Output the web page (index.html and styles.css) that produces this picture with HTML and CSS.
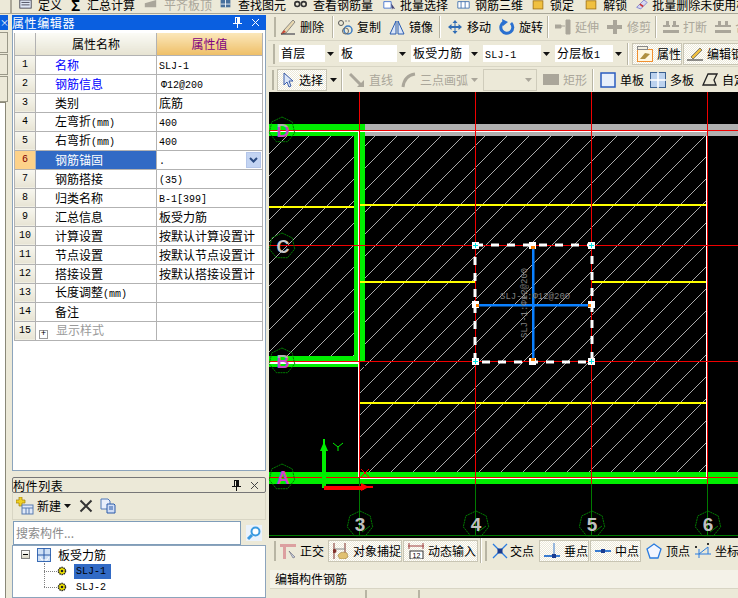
FILE: index.html
```html
<!DOCTYPE html>
<html lang="zh">
<head>
<meta charset="utf-8">
<title>属性编辑器</title>
<link rel="stylesheet" href="styles.css">
</head>
<body>
<div class="app">
  <div class="topbar">
    <span class="grip"></span>
    <span class="t t-def"><svg class="i" viewBox="0 0 16 16"><rect x="1" y="0" width="14" height="10" fill="#dfe6f5" stroke="#334"/><path d="M3 3h10M3 6h10" stroke="#334"/></svg><b>定义</b></span>
    <span class="t t-sum"><span class="sigma">Σ</span><b>汇总计算</b></span>
    <span class="t t-flat dis"><svg class="i" viewBox="0 0 16 16"><path d="M1 4l14-4v9H1z" fill="#aaa69a"/></svg><b>平齐板顶</b></span>
    <span class="t t-find"><svg class="i" viewBox="0 0 16 16"><path d="M2 0h12v9H2z" fill="#48709c"/><path d="M8 0v9M2 5h12" stroke="#fff"/></svg><b>查找图元</b></span>
    <span class="t t-view"><svg class="i" viewBox="0 0 16 16"><circle cx="4" cy="5" r="3" fill="none" stroke="#333" stroke-width="2"/><circle cx="12" cy="5" r="3" fill="none" stroke="#333" stroke-width="2"/></svg><b>查看钢筋量</b></span>
    <span class="t t-batch"><svg class="i" viewBox="0 0 16 16"><path d="M1 2h9v8H1z" fill="#fff" stroke="#36c"/><path d="M10 4l5 7-3-1-1 2z" fill="#447"/></svg><b>批量选择</b></span>
    <span class="t t-3d"><svg class="i" viewBox="0 0 16 16"><path d="M1 2h14v8H1zM5 2v8M10 2v8" fill="#fff" stroke="#36a"/></svg><b>钢筋三维</b></span>
    <span class="t t-lock"><svg class="i i-s" viewBox="0 0 12 16"><rect x="0" y="1" width="12" height="10" fill="#f0c040" stroke="#a07010"/></svg><b>锁定</b></span>
    <span class="t t-unlock"><svg class="i i-s" viewBox="0 0 12 16"><rect x="0" y="1" width="12" height="10" fill="#f0c040" stroke="#a07010"/></svg><b>解锁</b></span>
    <span class="t t-del"><svg class="i" viewBox="0 0 16 16"><path d="M2 9L11 0l4 3-8 8z" fill="#d6d8f0" stroke="#77c"/><path d="M6 5l4 3" stroke="#c33" stroke-width="2"/></svg><b>批量删除未使用构件</b></span>
  </div>

  <div class="main">
    <div class="left">
      <div class="rail">
        <div class="rail-title">×</div>
        <div class="rail-tab"></div>
        <div class="rail-tab"></div>
        <div class="rail-tab rail-tab-last"></div>
        <div class="rail-white"></div>
      </div>
      <div class="panels">
        <div class="panel-title">
          <span class="panel-name">属性编辑器</span>
          <span class="pin">
            <svg class="pin-i" viewBox="0 0 9 11"><path d="M2 0h5v6h2v1H5v4H4V7H0V6h2zM3 1v5h1V1z" fill="#fff"/></svg>
            <svg class="close-i" viewBox="0 0 9 9"><path d="M1 1l7 7M8 1L1 8" stroke="#fff"/></svg>
          </span>
        </div>
        <div class="props">
          <table class="grid">
            <colgroup><col class="c-n"><col class="c-k"><col class="c-v"></colgroup>
            <thead>
              <tr><th></th><th>属性名称</th><th class="th-val">属性值</th></tr>
            </thead>
            <tbody>
              <tr><td class="n">1</td><td class="k blue">名称</td><td class="v"><span class="l">SLJ-1</span></td></tr>
              <tr><td class="n">2</td><td class="k blue">钢筋信息</td><td class="v"><span class="l phi">Φ12@200</span></td></tr>
              <tr><td class="n">3</td><td class="k">类别</td><td class="v">底筋</td></tr>
              <tr><td class="n">4</td><td class="k">左弯折<span class="l">(mm)</span></td><td class="v"><span class="l">400</span></td></tr>
              <tr><td class="n">5</td><td class="k">右弯折<span class="l">(mm)</span></td><td class="v"><span class="l">400</span></td></tr>
              <tr class="sel"><td class="n">6</td><td class="k">钢筋锚固</td><td class="v"><span class="l">.</span><span class="dd"><svg class="dd-i" viewBox="0 0 9 6"><path d="M1 1l3.500 3.500L8 1" fill="none" stroke="#2a4a80" stroke-width="2"/></svg></span></td></tr>
              <tr><td class="n">7</td><td class="k">钢筋搭接</td><td class="v"><span class="l">(35)</span></td></tr>
              <tr><td class="n">8</td><td class="k">归类名称</td><td class="v"><span class="l">B-1[399]</span></td></tr>
              <tr><td class="n">9</td><td class="k">汇总信息</td><td class="v">板受力筋</td></tr>
              <tr><td class="n">10</td><td class="k">计算设置</td><td class="v">按默认计算设置计</td></tr>
              <tr><td class="n">11</td><td class="k">节点设置</td><td class="v">按默认节点设置计</td></tr>
              <tr><td class="n">12</td><td class="k">搭接设置</td><td class="v">按默认搭接设置计</td></tr>
              <tr><td class="n">13</td><td class="k">长度调整<span class="l">(mm)</span></td><td class="v"></td></tr>
              <tr><td class="n">14</td><td class="k">备注</td><td class="v"></td></tr>
              <tr class="grp"><td class="n">15</td><td class="k"><span class="plus">+</span>显示样式</td><td class="v"></td></tr>
            </tbody>
          </table>
        </div>
        <div class="list-title">
          <span class="panel-name">构件列表</span>
          <span class="pin">
            <svg class="pin-i" viewBox="0 0 9 11"><path d="M2 0h5v6h2v1H5v4H4V7H0V6h2zM3 1v5h1V1z" fill="#111"/></svg>
            <svg class="close-i" viewBox="0 0 9 9"><path d="M1 1l7 7M8 1L1 8" stroke="#444"/></svg>
          </span>
        </div>
        <div class="list-tools">
          <svg class="i i-new" viewBox="0 0 18 18"><path d="M3 0h3v3h3v3H6v3H3V6H0V3h3z" fill="#f0d020" stroke="#a08010" stroke-width=".7"/><rect x="6" y="8" width="11" height="9" fill="#dfe8f8" stroke="#5a7cb0"/><path d="M6 11h11M10 11v6M13 11v6" stroke="#5a7cb0"/></svg>
          <span class="new-label">新建</span>
          <svg class="arrow-i" viewBox="0 0 7 4"><path d="M0 0h7L3.500 4z" fill="#111"/></svg>
          <svg class="i i-x" viewBox="0 0 14 14"><path d="M1.500 1.500l11 11M12.500 1.500l-11 11" stroke="#333" stroke-width="2"/></svg>
          <svg class="i i-copy" viewBox="0 0 16 16"><path d="M1 1h7l2 2v8H1z" fill="#e8eefb" stroke="#5078b8"/><path d="M7 6h7l1 1v8H7z" fill="#cfdcf5" stroke="#2a5aa8"/><path d="M9 9h4M9 11h4" stroke="#2a5aa8"/></svg>
        </div>
        <div class="search">
          <span class="search-box">搜索构件...</span>
          <svg class="i i-search" viewBox="0 0 16 16"><rect width="16" height="16" fill="#eaf2fb"/><circle cx="9.500" cy="6.500" r="4" fill="#fff" stroke="#3a9ae0" stroke-width="2"/><path d="M6 10l-4 4" stroke="#3a9ae0" stroke-width="3"/></svg>
        </div>
        <div class="tree">
          <div class="tree-root">
            <span class="minus"></span>
            <svg class="i i-root" viewBox="0 0 14 14"><rect x=".5" y=".5" width="13" height="13" fill="#cfe0f5" stroke="#3a6cb5"/><path d="M0 7h14M7 0v14" stroke="#2a5aa8"/><path d="M3 9l2 3h5l2-3" fill="none" stroke="#fff"/></svg>
            <span>板受力筋</span>
          </div>
          <div class="tree-leaf">
            <span class="dots dots-first"></span>
            <svg class="i i-gear" viewBox="0 0 10 10"><circle cx="5" cy="5" r="3.500" fill="#f5e800" stroke="#222" stroke-width="1.500" stroke-dasharray="1.500 .7"/><circle cx="5" cy="5" r="1.300" fill="#222"/></svg>
            <span class="leaf-name leaf-sel">SLJ-1</span>
          </div>
          <div class="tree-leaf">
            <span class="dots"></span>
            <svg class="i i-gear" viewBox="0 0 10 10"><circle cx="5" cy="5" r="3.500" fill="#f5e800" stroke="#222" stroke-width="1.500" stroke-dasharray="1.500 .7"/><circle cx="5" cy="5" r="1.300" fill="#222"/></svg>
            <span class="leaf-name">SLJ-2</span>
          </div>
        </div>
      </div>
    </div>

    <div class="right">
      <div class="tb tb1">
        <span class="grip-v"></span>
        <span class="tool"><svg class="i" viewBox="0 0 16 16"><path d="M1 15l5-1 9-11-2-2-9 10z" fill="#e8d8b0" stroke="#666" stroke-width=".7"/><path d="M1 15h14" stroke="#223"/><path d="M1 15l3-4 2 2z" fill="#c43"/></svg>删除</span>
        <span class="sep sep-a"></span>
        <span class="tool"><svg class="i" viewBox="0 0 16 16"><circle cx="4" cy="4" r="2.500" fill="none" stroke="#555"/><circle cx="11" cy="11" r="4" fill="none" stroke="#3a7cc5" stroke-width="1.500"/><circle cx="8.500" cy="12" r="3" fill="none" stroke="#666"/><path d="M8 2h5" stroke="#888" stroke-dasharray="2 1"/></svg>复制</span>
        <span class="tool"><svg class="i" viewBox="0 0 16 16"><path d="M7 2L1 15h6zM9 2l6 13H9z" fill="#dbe6f8" stroke="#2a5cb0"/></svg>镜像</span>
        <span class="sep sep-c"></span>
        <span class="tool"><svg class="i" viewBox="0 0 16 16"><path d="M8 1l2.500 3h-2v3h3V5L15 8l-3.500 3V9h-3v3h2L8 15l-2.500-3h2V9h-3v2L1 8l3.500-3v2h3V4h-2z" fill="#2f6cb5"/></svg>移动</span>
        <span class="tool"><svg class="i" viewBox="0 0 16 16"><path d="M12 4a6 6 0 1 1-7-1" fill="none" stroke="#2a70d0" stroke-width="3"/><path d="M3 0l6 3-5 4z" fill="#2a70d0"/></svg>旋转</span>
        <span class="sep sep-d"></span>
        <span class="tool dis"><svg class="i" viewBox="0 0 16 16"><path d="M0 6h6v3H0zM6 7h4M11 1h4v14h-4z" fill="#aaa69a" stroke="#aaa69a"/></svg>延伸</span>
        <span class="tool dis"><svg class="i" viewBox="0 0 16 16"><path d="M0 6h15v4H0zM6 1h4v14H6z" fill="#aaa69a"/></svg>修剪</span>
        <span class="sep sep-d"></span>
        <span class="tool dis"><svg class="i" viewBox="0 0 16 16"><path d="M3 2h3v4H3zM10 2h3v4h-3zM0 6h7v2H0zM9 6h7v2H9zM0 11h16v3H0z" fill="#aaa69a"/></svg>打断</span>
        <span class="tool dis"><svg class="i" viewBox="0 0 16 16"><path d="M3 2h3v4H3zM10 2h3v4h-3zM0 6h16v2H0zM0 11h16v3H0z" fill="#aaa69a"/></svg>合并</span>
      </div>

      <div class="tb tb2">
        <span class="grip-v"></span>
        <span class="combo c-floor"><span class="combo-t">首层</span><span class="combo-a"><svg class="arrow-i" viewBox="0 0 7 4"><path d="M0 0h7L3.500 4z" fill="#111"/></svg></span></span>
        <span class="combo c-wide"><span class="combo-t">板</span><span class="combo-a"><svg class="arrow-i" viewBox="0 0 7 4"><path d="M0 0h7L3.500 4z" fill="#111"/></svg></span></span>
        <span class="combo c-wide"><span class="combo-t">板受力筋</span><span class="combo-a"><svg class="arrow-i" viewBox="0 0 7 4"><path d="M0 0h7L3.500 4z" fill="#111"/></svg></span></span>
        <span class="combo c-wide"><span class="combo-t"><span class="l">SLJ-1</span></span><span class="combo-a"><svg class="arrow-i" viewBox="0 0 7 4"><path d="M0 0h7L3.500 4z" fill="#111"/></svg></span></span>
        <span class="combo c-wide"><span class="combo-t">分层板<span class="l">1</span></span><span class="combo-a"><svg class="arrow-i" viewBox="0 0 7 4"><path d="M0 0h7L3.500 4z" fill="#111"/></svg></span></span>
        <span class="sep sep-2"></span>
        <span class="tool btn btn-prop"><svg class="i" viewBox="0 0 16 16"><rect x=".5" y="3.500" width="15" height="12" fill="#fff7e0" stroke="#f09030"/><rect x=".5" y=".5" width="10" height="3" fill="#f4f0e0" stroke="#888"/><path d="M3 13l5-6 5 1-5 5z" fill="#b09040"/></svg>属性</span>
        <span class="tool btn btn-edit"><svg class="i" viewBox="0 0 16 16"><path d="M4 11L13 2l2 2-9 9z" fill="#f0c040" stroke="#555" stroke-width=".7"/><path d="M0 14h16" stroke="#222"/></svg>编辑钢筋</span>
      </div>

      <div class="tb tb3">
        <span class="grip-v"></span>
        <span class="tool btn btn-select"><svg class="i" viewBox="0 0 16 16"><path d="M4 1v12l3-3 2 5 2-1-2-5h4z" fill="#dbe6f8" stroke="#3a5ca8"/></svg>选择</span>
        <svg class="arrow-i arrow-sel" viewBox="0 0 7 4"><path d="M0 0h7L3.500 4z" fill="#111"/></svg>
        <span class="sep sep-e"></span>
        <span class="tool dis"><svg class="i" viewBox="0 0 16 16"><path d="M1 2l11 11" stroke="#aaa69a" stroke-width="3"/><path d="M15 15H8l7-7z" fill="#aaa69a"/></svg>直线</span>
        <span class="tool dis tool-arc"><svg class="i" viewBox="0 0 16 16"><path d="M2 15C3 7 7 3 14 2" fill="none" stroke="#aaa69a" stroke-width="3"/></svg>三点画弧<svg class="arrow-i" viewBox="0 0 7 4"><path d="M0 0h7L3.500 4z" fill="#aaa69a"/></svg></span>
        <span class="dis-box"><svg class="arrow-i" viewBox="0 0 7 4"><path d="M0 0h7L3.500 4z" fill="#aaa69a"/></svg></span>
        <span class="tool dis tool-rect"><svg class="i" viewBox="0 0 16 16"><rect y="2" width="16" height="11" fill="#aaa69a"/></svg>矩形</span>
        <span class="sep sep-f"></span>
        <span class="tool"><svg class="i" viewBox="0 0 16 16"><rect x="1" y="1" width="14" height="14" fill="#e8f0fb" stroke="#2a5cc0" stroke-width="1.500"/></svg>单板</span>
        <span class="tool tool-multi"><svg class="i" viewBox="0 0 16 16"><rect x=".5" y=".5" width="15" height="15" fill="#bcd2ee" stroke="#3a6090"/><path d="M8 0v16M0 8h16" stroke="#fff" stroke-width="1.500"/></svg>多板</span>
        <span class="tool"><svg class="i" viewBox="0 0 16 16"><path d="M1 13L6 2h9l-3 6 2 5z" fill="none" stroke="#222" stroke-width="1.300"/></svg>自定义</span>
      </div>

      <svg class="canvas" viewBox="268 92 470 446" xmlns="http://www.w3.org/2000/svg">
        <defs>
          <pattern id="hatch" patternUnits="userSpaceOnUse" x="5" y="0" width="22" height="22">
            <path d="M0 22L22 0" stroke="#aaa" stroke-width="1" shape-rendering="crispEdges"/>
          </pattern>
          <linearGradient id="twotone" x1="0" y1="0" x2="0" y2="1">
            <stop offset=".32" stop-color="#b0b0b0"/>
            <stop offset=".32" stop-color="#c848c8"/>
          </linearGradient>
          <polygon id="bub" points="0,-13 10.200,-8.100 12.700,2.900 5.600,11.700 -5.600,11.700 -12.700,2.900 -10.200,-8.100" fill="none" stroke="#007a00" stroke-dasharray="2 .6"/>
        </defs>
        <rect x="268" y="92" width="470" height="446" fill="#000"/>
        <rect x="268" y="92" width="1" height="446" fill="#ece9d8"/>

        <rect x="269" y="136" width="85" height="220" fill="url(#hatch)"/>
        <rect x="365" y="136" width="342" height="336" fill="url(#hatch)"/>
        <rect x="360" y="367" width="5" height="105" fill="url(#hatch)"/>

        <rect x="360" y="124" width="378" height="12" fill="#b0b0b0"/>
        <rect x="269" y="124" width="91" height="12" fill="#0e0"/>
        <rect x="354" y="124" width="11" height="238" fill="#0e0"/>
        <rect x="269" y="356" width="91" height="11" fill="#0e0"/>
        <rect x="269" y="472" width="469" height="12" fill="#0e0"/>

        <g fill="#ff0">
          <rect x="269" y="206" width="85" height="2"/>
          <rect x="359" y="204" width="348" height="2"/>
          <rect x="360" y="281" width="115" height="2"/>
          <rect x="592" y="281" width="115" height="2"/>
          <rect x="360" y="402" width="347" height="2"/>
        </g>

        <g fill="#fff">
          <rect x="269" y="130" width="438" height="2"/>
          <rect x="269" y="362" width="91" height="2"/>
          <rect x="358" y="130" width="2" height="348"/>
          <rect x="706" y="136" width="2" height="342"/>
          <rect x="360" y="477" width="348" height="2"/>
        </g>

        <g fill="#f00000">
          <rect x="269" y="130" width="469" height="1"/>
          <rect x="269" y="245" width="469" height="1"/>
          <rect x="269" y="361" width="469" height="1"/>
          <rect x="269" y="477" width="469" height="1"/>
          <rect x="359" y="92" width="1" height="386"/>
          <rect x="475" y="92" width="1" height="392"/>
          <rect x="591" y="92" width="1" height="392"/>
          <rect x="707" y="92" width="1" height="392"/>
        </g>

        <g fill="#007a00">
          <rect x="359" y="478" width="1" height="58"/>
          <rect x="475" y="484" width="1" height="52"/>
          <rect x="591" y="484" width="1" height="52"/>
          <rect x="707" y="484" width="1" height="52"/>
          <rect x="269" y="535" width="469" height="1"/>
        </g>

        <use href="#bub" x="282" y="130"/>
        <use href="#bub" x="282" y="246"/>
        <use href="#bub" x="282" y="361"/>
        <use href="#bub" x="282" y="477"/>
        <use href="#bub" x="360" y="524"/>
        <use href="#bub" x="476" y="524"/>
        <use href="#bub" x="592" y="524"/>
        <use href="#bub" x="708" y="524"/>

        <g class="cad-l">
          <text x="283" y="136.500" fill="url(#twotone)">D</text>
          <text class="cad-c" x="283" y="252.500">C</text>
          <text x="283" y="367.500" fill="url(#twotone)">B</text>
          <text class="cad-a" x="283" y="483.500">A</text>
        </g>
        <g class="cad-n">
          <text x="360" y="531">3</text>
          <text x="476" y="531">4</text>
          <text x="592" y="531">5</text>
          <text x="708" y="531">6</text>
        </g>
        <path d="M362 532l8-6M478 532l8-6M594 532l8-6M710 532l8-6" stroke="#007a00"/>

        <path d="M475 245H592V362H475Z" fill="none" stroke="#fff" stroke-width="3" stroke-dasharray="8 8"/>
        <rect x="532" y="246" width="2.500" height="115" fill="#0a80ff"/>
        <rect x="476" y="304" width="115" height="2.500" fill="#0a80ff"/>

        <g fill="#fff">
          <rect x="472" y="242" width="7" height="7"/>
          <rect x="588" y="242" width="7" height="7"/>
          <rect x="472" y="358" width="7" height="7"/>
          <rect x="588" y="358" width="7" height="7"/>
          <rect x="529" y="242" width="7" height="7"/>
          <rect x="529" y="358" width="7" height="7"/>
          <rect x="472" y="301" width="7" height="7"/>
          <rect x="588" y="301" width="7" height="7"/>
        </g>
        <path d="M473 245.500h5M475.500 243v5M589 245.500h5M591.500 243v5M473 361.500h5M475.500 359v5M589 361.500h5M591.500 359v5" stroke="#00e0e0"/>
        <g fill="#ff8000">
          <rect x="531" y="246" width="4" height="3"/>
          <rect x="531" y="358" width="4" height="3"/>
          <rect x="476" y="304" width="3" height="3"/>
          <rect x="588" y="304" width="3" height="3"/>
        </g>

        <text class="cad-t" x="500" y="299">SLJ-1:Φ12@200</text>
        <text class="cad-t" transform="translate(527 338) rotate(-90)">SLJ-1:Φ12@200</text>

        <path d="M322 488V451H320L323 444V439H325V444L328 451H326V488Z" fill="#0e0"/>
        <path d="M333 443L338 447L343 443M338 447V451" fill="none" stroke="#0e0"/>
        <rect x="324" y="486" width="40" height="4" fill="#f00"/>
        <path d="M361 483L367 486H373V488H367L361 491Z" fill="#f00"/>
        <path d="M361 469L369 477M369 469L361 477" stroke="#f00"/>
      </svg>

      <div class="tb tb4">
        <span class="grip-v"></span>
        <span class="tool"><svg class="i" viewBox="0 0 16 16"><path d="M0 1h16v3H6v12H3V4H0z" fill="#dca0a0"/><path d="M9 8l6 6-2 1z" fill="#c8d0e0" stroke="#667" stroke-width=".6"/></svg>正交</span>
        <span class="btn-group">
          <span class="tool btn btn-snap-a"><svg class="i" viewBox="0 0 16 16"><path d="M1 0v16M12 0v16" stroke="#80302a"/><path d="M1 6h11" stroke="#888"/><circle cx="1.500" cy="8" r="2" fill="#80302a"/><path d="M5 13c0-3 5-5 9-3l1 4-3 2H7z" fill="#e0c070" stroke="#a08040" stroke-width=".6"/></svg>对象捕捉</span>
          <span class="tool btn btn-snap-b"><svg class="i" viewBox="0 0 16 16"><path d="M0 3h16M1 0v6M15 0v6" stroke="#a04040"/><rect x="2" y="8" width="13" height="8" fill="#fff" stroke="#333"/><text class="mini" x="8.500" y="15">12</text></svg>动态输入</span>
        </span>
        <span class="sep sep-b"></span>
        <span class="grip-v"></span>
        <span class="tool tool-cross"><svg class="i" viewBox="0 0 16 16"><path d="M1 1l14 14M15 1L1 15" stroke="#2a7ce0" stroke-width="1.300"/><rect x="5.500" y="5.500" width="5" height="5" fill="#1a3c90"/></svg>交点</span>
        <span class="btn-group">
          <span class="tool btn btn-snap-c"><svg class="i" viewBox="0 0 16 16"><path d="M0 13h16" stroke="#3a7cd0" stroke-width="2"/><path d="M10 0v15" stroke="#3a7cd0"/><rect x="8" y="11" width="4" height="4" fill="#1a3c90"/></svg>垂点</span>
          <span class="tool btn btn-snap-d"><svg class="i" viewBox="0 0 16 16"><path d="M0 8h16" stroke="#3a7cd0" stroke-width="2"/><rect x="6" y="6" width="4" height="4" fill="#1a3c90"/></svg>中点</span>
        </span>
        <span class="tool"><svg class="i" viewBox="0 0 16 16"><path d="M8 1l7 5-3 9H4L1 6z" fill="#f2f6ff" stroke="#2a7ce0" stroke-width="1.300"/></svg>顶点</span>
        <span class="tool"><svg class="i" viewBox="0 0 16 16"><path d="M4 6v9M0 11h16M4 11L13 4v7" fill="none" stroke="#2a7ce0"/><path d="M0 3l2 2M2 3L0 5M12 0l2 2M14 0l-2 2" stroke="#333"/></svg>坐标</span>
      </div>

      <div class="status"><span class="status-box">编辑构件钢筋</span></div>
      <div class="clip-bar">
        <span class="clip-sep clip-a"></span>
        <span class="clip-sep clip-b"></span>
      </div>
    </div>
  </div>
</div>
</body>
</html>
```

FILE: styles.css
```css
* { box-sizing: border-box; }
html, body { margin: 0; padding: 0; }
body {
  width: 738px;
  height: 598px;
  overflow: hidden;
  background: #ece9d8;
  font-family: "Noto Sans CJK SC", "Liberation Sans", sans-serif;
  font-size: 12px;
  color: #000;
}
.app { width: 738px; height: 598px; display: flex; flex-direction: column; overflow: hidden; }
.l { font-family: "Liberation Mono", monospace; font-size: 10px; line-height: 1; }
.phi { margin-left: 2px; }
.i { display: block; width: 16px; height: 16px; flex: none; }
.dis { color: #aaa69a; }

/* top strip, cut off by the window */
.topbar {
  height: 14px;
  flex: none;
  display: flex;
  align-items: flex-end;
  overflow: hidden;
  border-bottom: 1px solid #a8a698;
  padding-left: 10px;
}
.grip { width: 2px; height: 13px; background: #aca899; flex: none; margin-right: 6px; }
.t { display: flex; align-items: flex-end; flex: none; height: 16px; gap: 5px; }
.t b { font-weight: 400; line-height: 16px; font-size: 12px; }
.t .i { height: 13px; width: 15px; }
.t .i-s { width: 12px; }
.sigma { font-weight: 700; font-size: 15px; line-height: 16px; width: 10px; }
.t-sum { margin-left: 9px; gap: 6px; }
.t-flat { margin-left: 8px; gap: 6px; }
.t-find { margin-left: 6px; gap: 5px; }
.t-view { margin-left: 7px; gap: 5px; }
.t-batch { margin-left: 9px; gap: 3px; }
.t-3d { margin-left: 8px; gap: 4px; }
.t-lock { margin-left: 9px; gap: 6px; }
.t-unlock { margin-left: 11px; gap: 6px; }
.t-del { margin-left: 7px; gap: 3px; }

.main { flex: 1; min-height: 0; display: flex; }

/* left column */
.left { width: 268px; flex: none; display: flex; }
.rail { width: 12px; flex: none; display: flex; flex-direction: column; padding-top: 1px; }
.rail-title {
  height: 15px;
  background: #0a5fe0;
  color: #fff;
  font-size: 9px;
  line-height: 15px;
  overflow: hidden;
  width: 8px;
  margin-bottom: 2px;
}
.rail-tab { height: 21px; width: 8px; background: #ece9d8; border: 1px solid #9a9888; border-left: 0; margin-bottom: 1px; }
.rail-tab-last { height: 26px; margin-bottom: 0; }
.rail-white { flex: 1; width: 6px; background: #fff; border-right: 1px solid #8a8878; border-top: 1px solid #8a8878; }

.panels { width: 254px; flex: none; display: flex; flex-direction: column; padding-top: 1px; }
.panel-title {
  height: 15px;
  flex: none;
  background: #0a5fe0;
  color: #fff;
  display: flex;
  align-items: center;
  justify-content: space-between;
}
.panel-name { font-size: 12px; letter-spacing: .6px; line-height: 15px; }
.pin { display: flex; align-items: center; gap: 9px; padding-right: 6px; }
.pin-i { width: 9px; height: 11px; display: block; }
.close-i { width: 9px; height: 9px; display: block; }

.props {
  height: 441px;
  flex: none;
  background: #fff;
  border: 1px solid #8ca4bc;
  border-top: 0;
  padding: 3px 0 0 1px;
}
.grid { border-collapse: collapse; table-layout: fixed; width: 248px; }
.c-n { width: 21px; }
.c-k { width: 121px; }
.c-v { width: 106px; }
.grid th, .grid td { border: 1px solid #b2b2b2; padding: 0; height: 19px; line-height: 14px; white-space: nowrap; overflow: hidden; font-weight: 400; }
.grid thead th { height: 22px; background: linear-gradient(#fbfbf6, #e6e3d2); border-top: 0; }
.grid thead th.th-val { background: linear-gradient(#fbe7ba, #eebf68); color: #800080; }
.grid .n { background: linear-gradient(#f8f7f0, #e7e4d4); text-align: center; font-family: "Liberation Mono", monospace; font-size: 10px; }
.grid .k { padding-left: 19px; }
.grid .v { padding-left: 2px; position: relative; }
.blue { color: #0000ff; }
.sel .n { background: #fdd28a; color: #800000; }
.sel .k { background: #316ac5; color: #fff; }
.dd {
  position: absolute;
  right: 1px;
  top: 1px;
  width: 15px;
  height: 16px;
  background: #c3d4f2;
  border: 1px solid #b4c6ea;
  display: flex;
  align-items: center;
  justify-content: center;
}
.dd-i { width: 9px; height: 6px; display: block; }
.grp .k { color: #9a9a9a; padding-left: 2px; }
.plus {
  display: inline-block;
  width: 9px;
  height: 9px;
  border: 1px solid #9a9a9a;
  color: #000;
  font-size: 9px;
  line-height: 7px;
  text-align: center;
  font-family: "Liberation Mono", monospace;
  margin: 0 8px 0 1px;
  vertical-align: -1px;
}

.list-title {
  height: 16px;
  flex: none;
  margin-top: 6px;
  border: 1px solid #777;
  border-radius: 2px;
  background: #ece9d8;
  display: flex;
  align-items: center;
  justify-content: space-between;
}
.list-tools {
  height: 27px;
  flex: none;
  display: flex;
  align-items: center;
  padding-left: 3px;
  border: 1px solid #d8d5c4;
  border-top: 0;
}
.i-new { width: 18px; height: 18px; }
.new-label { margin-left: 3px; line-height: 16px; }
.arrow-i { width: 7px; height: 4px; display: block; flex: none; }
.list-tools .arrow-i { margin-left: 3px; }
.i-x { width: 14px; height: 14px; margin-left: 8px; }
.i-copy { margin-left: 7px; }
.search { height: 25px; flex: none; display: flex; align-items: center; padding-left: 1px; }
.search-box {
  width: 228px;
  height: 24px;
  background: #fff;
  border: 1px solid #7f9db9;
  color: #8a8a8a;
  line-height: 22px;
  padding-left: 2px;
}
.i-search { margin-left: 5px; }
.tree { flex: 1; background: #fff; border: 1px solid #8ca4bc; padding-left: 8px; }
.tree-root { display: flex; align-items: center; height: 17px; line-height: 16px; }
.minus {
  width: 9px;
  height: 9px;
  border: 1px solid #808080;
  background: linear-gradient(#fff, #d8d5c4);
  position: relative;
  flex: none;
}
.minus::after { content: ""; position: absolute; left: 1px; right: 1px; top: 3px; height: 1px; background: #000; }
.i-root { width: 14px; height: 14px; margin: 0 7px; }
.tree-leaf { display: flex; align-items: center; height: 16px; padding-left: 23px; }
.dots { width: 13px; border-bottom: 1px dotted #808080; position: relative; flex: none; }
.dots::before { content: ""; position: absolute; left: 0; bottom: 0; height: 16px; border-left: 1px dotted #808080; }
.dots-first::before { height: 8px; }
.i-gear { width: 10px; height: 10px; }
.leaf-name { margin-left: 7px; padding: 0 2px; font-family: "Liberation Mono", monospace; font-size: 10px; line-height: 15px; }
.leaf-sel { background: #316ac5; width: 37px; }

/* right column */
.right { flex: 1; min-width: 0; display: flex; flex-direction: column; }
.tb { flex: none; display: flex; align-items: center; gap: 8px; white-space: nowrap; overflow: hidden; }
.tb1 { height: 26px; padding-left: 6px; }
.tb1 > .grip-v { margin-right: -4px; }
.tb2 { height: 26px; padding-left: 5px; gap: 4px; border-top: 1px solid #d8d5c4; }
.tb3 { height: 26px; padding-left: 4px; border-top: 1px solid #d8d5c4; }
.tb3 > .grip-v { margin-right: -5px; }
.tb4 { height: 25px; padding-left: 6px; gap: 5px; }
.tb4 > .grip-v:first-child { margin-right: -1px; }
.grip-v { width: 2px; height: 20px; background: #b8b5a4; flex: none; }
.tool { display: flex; align-items: center; gap: 4px; flex: none; line-height: 16px; }
.sep { width: 2px; height: 22px; background: #b8b5a4; border-right: 1px solid #fff; flex: none; }
.sep-a { margin-right: -5px; }
.sep-c { margin: 0 -2px 0 -2px; }
.sep-d { margin: 0 -2px 0 -4px; }
.sep-e { margin: 0 -2px 0 -4px; }
.sep-f { margin: 0 -2px 0 -3px; }
.sep-2 { margin-right: -1px; }
.sep-b { margin: 0 -2px 0 -3px; height: 25px; }
.btn {
  border: 1px solid #c8c5b4;
  background: repeating-conic-gradient(#fff 0 25%, #ece9d8 0 50%) 0 0 / 2px 2px;
  height: 22px;
  padding-left: 4px;
}
.btn-prop { width: 50px; }
.btn-edit { width: 70px; margin-left: -3px; padding-left: 3px; }
.btn-select { width: 50px; padding-left: 2px; gap: 3px; }
.arrow-sel { margin-left: -5px; }
.tool-arc { gap: 3px; }
.dis-box {
  width: 54px;
  height: 22px;
  border: 1px solid #cfccbb;
  flex: none;
  margin-left: -3px;
  display: flex;
  align-items: center;
  justify-content: flex-end;
  padding-right: 4px;
}
.tool-rect { margin-left: -2px; }
.tool-multi { margin-left: -2px; }
.combo { display: flex; height: 17px; background: #fff; flex: none; }
.c-floor { width: 56px; }
.c-wide { width: 68px; }
.combo-t { flex: 1; padding-left: 2px; line-height: 16px; letter-spacing: .3px; }
.combo-a { width: 10px; background: #ece9d8; display: flex; align-items: center; justify-content: center; }
.canvas { display: block; width: 470px; height: 446px; flex: none; }
.cad-l text { font-family: "Liberation Sans", sans-serif; font-size: 18px; font-weight: 700; text-anchor: middle; }
.cad-c { fill: #c8c8c8; }
.cad-a { fill: #d040d0; }
.cad-n text { font-family: "Liberation Sans", sans-serif; font-size: 19px; font-weight: 700; fill: #c0c0c0; text-anchor: middle; }
.cad-t { font-family: "Liberation Mono", monospace; font-size: 9px; fill: #808080; }
.mini { font-family: "Liberation Sans", sans-serif; font-size: 7px; text-anchor: middle; fill: #000; }
.btn-group { display: flex; gap: 1px; flex: none; }
.btn-snap-a { width: 74px; margin-left: -1px; }
.btn-snap-b { width: 75px; }
.btn-snap-c { width: 50px; }
.btn-snap-d { width: 51px; }
.tool-cross { gap: 2px; }
.status { height: 27px; flex: none; padding-top: 7px; padding-left: 2px; }
.status-box {
  display: block;
  height: 19px;
  line-height: 18px;
  padding-left: 5px;
  background: #f4f2e8;
  border-bottom: 1px solid #d8d5c4;
}
.clip-bar { flex: 1; min-height: 0; display: flex; }
.clip-sep { width: 2px; background: #b8b5a4; flex: none; }
.clip-a { margin-left: 97px; }
.clip-b { margin-left: 51px; }
```
